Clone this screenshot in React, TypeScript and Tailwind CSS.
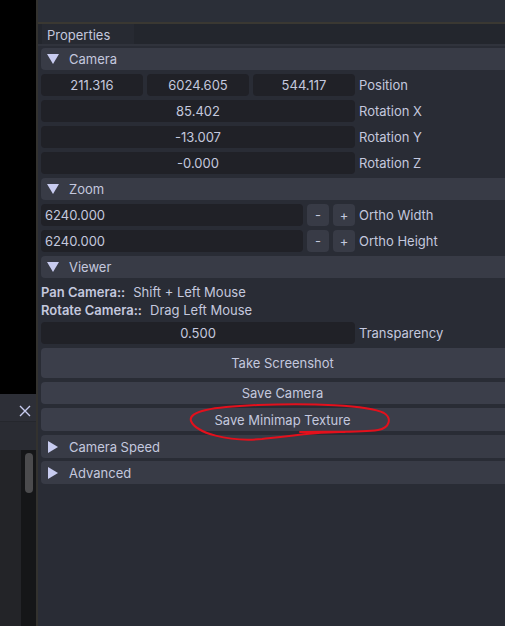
import React from "react";

const txt = "text-[#c4c8de]";

function Header({ label, open, h = "h-[22px]" }: { label: string; open: boolean; h?: string }) {
  return (
    <div className={`flex ${h} w-[483px] items-center rounded-[4px] bg-[#383b46] pt-[2px]`}>
      <span className="ml-[6px] -mt-[2px] flex w-[12px] items-center justify-center">
        {open ? (
          <svg width="12" height="10" viewBox="0 0 12 10">
            <polygon points="0,0 12,0 6,10" fill="#c8ccf0" />
          </svg>
        ) : (
          <svg width="10" height="12" viewBox="0 0 10 12">
            <polygon points="0,0 10,6 0,12" fill="#c8ccf0" />
          </svg>
        )}
      </span>
      <span className="ml-[10px]">{label}</span>
    </div>
  );
}

function Field({ value, align = "center", className = "" }: { value: string; align?: "center" | "left"; className?: string }) {
  return (
    <div
      className={`flex h-[22px] items-center rounded-[4px] bg-[#202127] pt-[2px] ${
        align === "center" ? "justify-center" : "justify-start pl-[4px]"
      } ${className}`}
    >
      {value}
    </div>
  );
}

function Row({ children, label }: { children: React.ReactNode; label: string }) {
  return (
    <div className="flex h-[22px] items-center">
      <div className="flex w-[314px] gap-[4px]">{children}</div>
      <span className="ml-[4px] pt-[2px]">{label}</span>
    </div>
  );
}

function Btn({ label, h = "h-[22px]" }: { label: string; h?: string }) {
  return (
    <div className={`flex ${h} w-[483px] items-center justify-center rounded-[4px] bg-[#3b3e4a] pt-[2px]`}>
      {label}
    </div>
  );
}

function Step({ sign }: { sign: string }) {
  return (
    <div className="flex h-[22px] w-[22px] items-center justify-center rounded-[4px] bg-[#383b46] pt-[2px]">
      {sign}
    </div>
  );
}

export default function App() {
  return (
    <div
      className={`relative flex h-[626px] w-[505px] overflow-hidden bg-[#292c35] text-[13px] ${txt}`}
      style={{ fontFamily: "Inter, 'Noto Sans', sans-serif" }}
    >
      {/* left column */}
      <div className="flex w-[36px] flex-col">
        <div className="h-[394px] bg-black" />
        <div className="flex h-[27px] items-start justify-end bg-[#2d2f37] pr-[5px] pt-[11px]">
          <svg width="12" height="12" viewBox="0 0 12 12">
            <path d="M1 1 L11 11 M11 1 L1 11" stroke="#c8ccf0" strokeWidth="1.4" />
          </svg>
        </div>
        <div className="h-[29px] border-t border-[#25272d] bg-[#2a2c33]" />
        <div className="flex flex-1">
          <div className="w-[21px] bg-[#232428]" />
          <div className="flex w-[15px] justify-center bg-[#151618] pt-[3px]">
            <div className="h-[40px] w-[8px] rounded-full bg-[#4b4b4d]" />
          </div>
        </div>
      </div>
      <div className="w-[2px] bg-[#33322f]" />

      {/* right panel */}
      <div className="flex min-w-0 flex-1 flex-col">
        <div className="h-[22px] bg-[#2b2f38]" />
        <div className="h-[2px] bg-[#3a3832]" />
        <div className="flex h-[20px] bg-[#23262d]">
          <div className="ml-[4px] flex w-[92px] items-center bg-[#272a32] pl-[5px] pt-[3px]">Properties</div>
        </div>
        <div className="h-[2px] bg-[#30333c]" />

        <div className="flex flex-col gap-[4px] pl-[3px] pt-[2px]">
          <Header label="Camera" open />
          <Row label="Position">
            <Field value="211.316" className="w-[102px]" />
            <Field value="6024.605" className="w-[102px]" />
            <Field value="544.117" className="w-[102px]" />
          </Row>
          <Row label="Rotation X">
            <Field value="85.402" className="flex-1" />
          </Row>
          <Row label="Rotation Y">
            <Field value="-13.007" className="flex-1" />
          </Row>
          <Row label="Rotation Z">
            <Field value="-0.000" className="flex-1" />
          </Row>

          <Header label="Zoom" open />
          {["Ortho Width", "Ortho Height"].map((l) => (
            <Row key={l} label={l}>
              <Field value="6240.000" align="left" className="flex-1" />
              <Step sign="-" />
              <Step sign="+" />
            </Row>
          ))}

          <Header label="Viewer" open />
          <div className="flex flex-col pt-[2px]">
            <div className="flex h-[18px] items-center">
              <span className="font-semibold">Pan Camera::</span>
              <span className="ml-[8px]">Shift + Left Mouse</span>
            </div>
            <div className="flex h-[18px] items-center">
              <span className="font-semibold">Rotate Camera::</span>
              <span className="ml-[8px]">Drag Left Mouse</span>
            </div>
          </div>
          <div className="-mt-[2px]">
            <Row label="Transparency">
              <Field value="0.500" className="flex-1" />
            </Row>
          </div>
          <Btn label="Take Screenshot" h="h-[30px]" />
          <Btn label="Save Camera" />
          <Btn label="Save Minimap Texture" h="h-[23px]" />
          <div className="flex flex-col gap-[3px]">
            <Header label="Camera Speed" open={false} h="h-[23px]" />
            <Header label="Advanced" open={false} h="h-[23px]" />
          </div>
        </div>
      </div>

      {/* red annotation */}
      <svg className="pointer-events-none absolute left-0 top-0" width="505" height="626" viewBox="0 0 505 626">
        <path
          d="M345 432 C325 431 295 435 262 439 C228 442 196 433 191 421 C188 411 212 407 258 405 C310 403 368 405 384 413 C392 418 390 428 378 430 C358 433 325 431 300 432"
          fill="none"
          stroke="#e3101c"
          strokeWidth="2"
          strokeLinecap="round"
        />
      </svg>
    </div>
  );
}
